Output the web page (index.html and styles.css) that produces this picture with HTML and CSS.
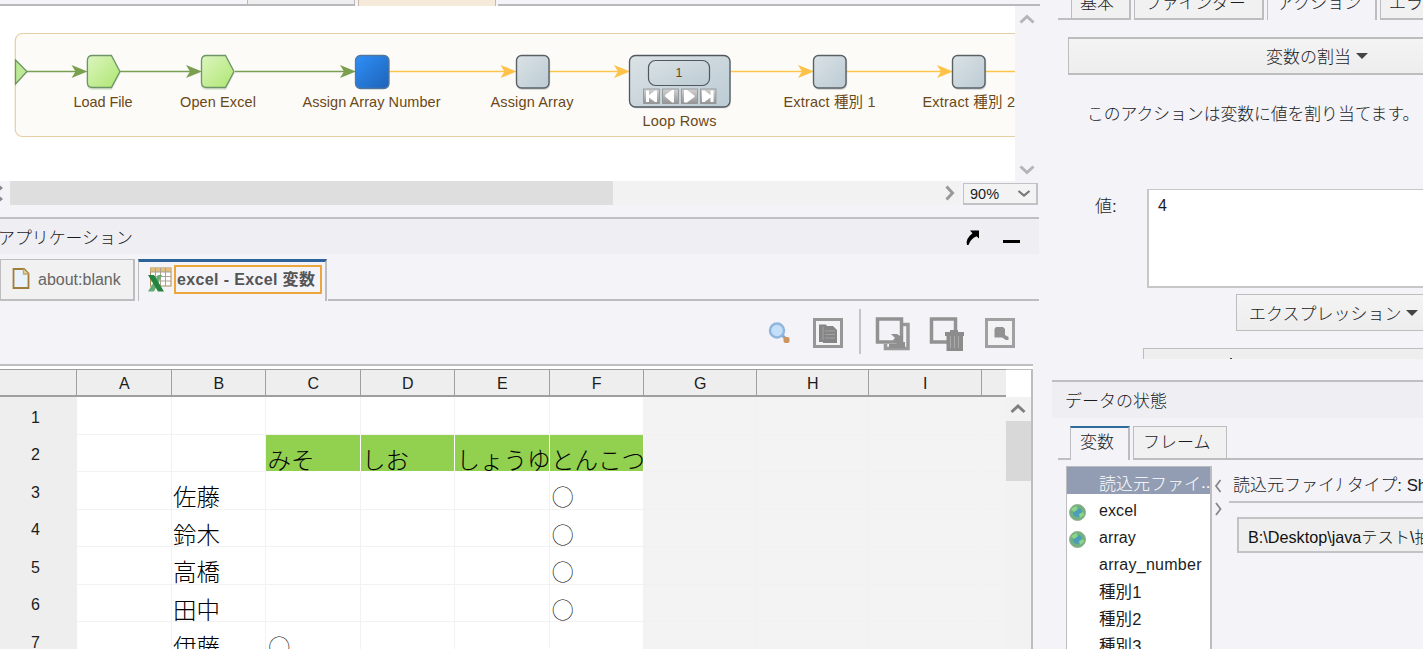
FILE: index.html
```html
<!DOCTYPE html>
<html lang="ja">
<head>
<meta charset="utf-8">
<title>アプリケーション</title>
<link rel="stylesheet" href="styles.css">
</head>
<body>
<div class="app">
  <main class="left">
    <div class="file-tabs"><i class="ft-line a"></i><i class="ft-tab"></i><i class="ft-line c"></i><i class="ft-active"></i><i class="ft-line b"></i></div>
    <div class="canvas-row">
      <svg class="flow" width="1015" height="175" viewBox="0 6 1015 175">
        <defs>
          <linearGradient id="green" x1="0" y1="0" x2="1" y2="1"><stop offset="0" stop-color="#dcf5c0"/><stop offset="1" stop-color="#aee670"/></linearGradient>
          <linearGradient id="gray" x1="0" y1="0" x2="1" y2="1"><stop offset="0" stop-color="#dae2e5"/><stop offset="1" stop-color="#bccbd4"/></linearGradient>
          <linearGradient id="blue" x1="0" y1="0" x2="1" y2="1"><stop offset="0" stop-color="#2e90f8"/><stop offset="1" stop-color="#1e62b8"/></linearGradient>
          <linearGradient id="btn" x1="0" y1="0" x2="0" y2="1"><stop offset="0" stop-color="#d2d2d2"/><stop offset="1" stop-color="#959595"/></linearGradient>
          <path id="head" d="M-16-6.5L0 0L-16 6.5L-12 0Z"/>
          <rect id="step" width="32.500" height="32.500" rx="5" fill="url(#gray)" stroke="#5a6165" stroke-width="1.4"/>
          <path id="pent" d="M5 0H24L32.5 16L24 32H5Q0 32 0 27V5Q0 0 5 0Z" fill="url(#green)" stroke="#6d9568" stroke-width="1.3"/>
        </defs>
        <rect x="15.3" y="33.5" width="1040" height="103" rx="7" fill="#fcfbf8" stroke="#e6cfa4" stroke-width="1.2"/>
        <path d="M15.5 60L27 71.500L15.500 84Z" fill="#bde995" stroke="#6d9568" stroke-width="1.3"/>
        <g stroke="#7a9f52" stroke-width="1.3"><path d="M27 71.500H76M120 71.500H190M235 71.500H345"/></g>
        <g fill="#7a9f4f"><use href="#head" x="87.500" y="71.500"/><use href="#head" x="202" y="71.500"/><use href="#head" x="356" y="71.500"/></g>
        <g stroke="#fdc64b" stroke-width="1.400"><path d="M389 71.500H505M549 71.500H620M730 71.500H802M846 71.500H941M985 71.500H1015"/></g>
        <g fill="#fdc247"><use href="#head" x="516.500" y="71.500"/><use href="#head" x="630" y="71.500"/><use href="#head" x="814" y="71.500"/><use href="#head" x="953" y="71.500"/></g>
        <use href="#pent" x="87.400" y="57" opacity=".25"/><use href="#pent" x="87.400" y="55.500"/>
        <use href="#pent" x="201.500" y="57" opacity=".25"/><use href="#pent" x="201.500" y="55.500"/>
        <rect x="355.500" y="55.500" width="33.500" height="33" rx="5" fill="url(#blue)" stroke="#54789c" stroke-width="1.300"/>
        <use href="#step" x="517" y="56.500" opacity=".3"/><use href="#step" x="516.500" y="55.500"/>
        <use href="#step" x="814" y="56.500" opacity=".3"/><use href="#step" x="813.500" y="55.500"/>
        <use href="#step" x="953" y="56.500" opacity=".3"/><use href="#step" x="952.500" y="55.500"/>
        <rect x="630" y="57" width="101" height="51.500" rx="6" fill="#b9c2c6" opacity=".5"/>
        <rect x="629.500" y="55.500" width="100.500" height="51.500" rx="6" fill="url(#gray)" stroke="#50585e" stroke-width="1.300"/>
        <rect x="648.500" y="60.500" width="61" height="25" rx="7" fill="url(#gray)" stroke="#50585e" stroke-width="1.200"/>
        <g fill="url(#btn)" stroke="#8d9193" stroke-width=".8"><rect x="643.500" y="89" width="16" height="14.500"/><rect x="662.500" y="89" width="16" height="14.500"/><rect x="681.500" y="89" width="16" height="14.500"/><rect x="700.500" y="89" width="15.500" height="14.500"/></g>
        <g fill="#fff"><path d="M646 90.500h3v4.500l6-4.500h2v11.500h-2l-6-4.500v4.500H646zM674 90v12.500h-2L665 96.500V95l7-5zM684 90h3l7.500 5.500v1.500L687 102.500h-3zM702 90.500h2.500l6 4.500v-4.500h3V102h-3v-4.500l-6 4.500H702z"/></g>
        <g class="flow-text">
          <text x="73.500" y="107" textLength="59">Load File</text>
          <text x="180" y="107" textLength="76">Open Excel</text>
          <text x="302.500" y="107" textLength="138">Assign Array Number</text>
          <text x="490.500" y="107" textLength="83">Assign Array</text>
          <text x="642.500" y="126" textLength="74">Loop Rows</text>
          <text x="783.500" y="107" textLength="92">Extract 種別 1</text>
          <text x="922.500" y="107" textLength="92.500">Extract 種別 2</text>
          <text class="count" x="675.500" y="77">1</text>
        </g>
      </svg>
      <div class="vscroll">
        <svg width="16" height="10" viewBox="0 0 16 10"><path d="M1.500 8.500L8 2.500L14.500 8.500" fill="none" stroke="#b5b5b8" stroke-width="3"/></svg>
        <svg width="16" height="10" viewBox="0 0 16 10"><path d="M1.500 1.500L8 7.500L14.500 1.500" fill="none" stroke="#b5b5b8" stroke-width="3"/></svg>
      </div>
    </div>
    <div class="hscroll">
      <svg class="split" width="10" height="24" viewBox="0 0 10 24"><path d="M0 4.500L3 7L0 9.500ZM0 15.500L3 18L0 20.500Z" fill="#888"/></svg>
      <div class="track"><i class="thumb"></i><svg width="10" height="16" viewBox="0 0 10 16"><path d="M1.500 1.500L7.500 8L1.500 14.500" fill="none" stroke="#999" stroke-width="3"/></svg></div>
      <div class="zoom-select"><span>90%</span><svg width="14" height="8" viewBox="0 0 14 8"><path d="M1.500 1L7 5.500L12.500 1" fill="none" stroke="#777" stroke-width="2.200"/></svg></div>
    </div>
    <header class="app-head">
      <span class="jp">アプリケーション</span>
      <div class="head-icons">
        <svg width="15" height="17" viewBox="0 0 15 17"><path d="M5 1.500H14V9.500L11.500 7.200Q5.500 10 3.500 16H2Q0 10 7.500 4.200Z"/></svg>
        <i class="minimize"></i>
      </div>
    </header>
    <div class="doc-tabs">
      <div class="doc-tab"><svg width="18" height="22" viewBox="0 0 18 22"><path d="M1.500 1H12L16.500 5.500V20H1.500Z" fill="#e9f1fb" stroke="#a07e3a" stroke-width="1.800"/><path d="M11.500 1V6H16.500" fill="#e5d4a5" stroke="#c4a562" stroke-width="1.300"/></svg><span>about:blank</span></div>
      <i class="tab-gap"></i>
      <div class="doc-tab active"><svg width="24" height="25" viewBox="0 0 24 25"><rect x="2.500" y="1" width="20.500" height="18" fill="#fff" stroke="#aa8e56"/><path d="M2.500 1H23V5H2.500Z" fill="#e0bd7d"/><path d="M7.500 1V19M12.500 1V19M17.500 1V19M2.500 5H23M2.500 9.500H23M2.500 14H23" stroke="#a9a291"/><path d="M10 8H14L6 24.500H0Z" fill="#67ad73"/><path d="M0 8H6L16 24.500H10Z" fill="#23833f"/></svg><span class="focus">excel - Excel 変数</span></div>
      <i class="tab-fill"></i>
    </div>
    <div class="toolbar">
      <svg class="t1" width="24" height="24" viewBox="0 0 24 24"><path d="M13 13L17 17" stroke="#8fa6c0" stroke-width="3"/><circle cx="9" cy="9.500" r="7" fill="#c4e0f8" stroke="#8fb6de" stroke-width="2.500"/><rect x="15.500" y="16" width="6" height="6" rx="2" fill="#cc955f"/></svg>
      <svg class="t2" width="32" height="32" viewBox="0 0 32 32"><rect x="2.500" y="2.500" width="27" height="27" fill="#f3f3f5" stroke="#979797" stroke-width="3"/><path d="M7 7.500H14L15 9H21L25 13V26H11V25H7Z" fill="#858585"/><path d="M11 10V23M13 14H23M13 17.500H23M13 21H23" stroke="#a2a2a2"/></svg>
      <i class="sep"></i>
      <svg class="t3" width="36" height="36" viewBox="0 0 36 36"><path d="M27 8.500H33V32.500H10.500V28" fill="none" stroke="#999" stroke-width="3.500"/><rect x="2.500" y="3" width="24" height="23" fill="#f3f3f7" stroke="#929292" stroke-width="3.500"/><path d="M16 18H22L25 20H28V26H30V32H14V28H22L18 24L20 22Z" fill="#8f8f8f"/></svg>
      <svg class="t4" width="36" height="36" viewBox="0 0 36 36"><rect x="2.500" y="3" width="24" height="23" fill="#f3f3f7" stroke="#929292" stroke-width="3.500"/><path d="M16 16H21V14H29V16H35V20H34V35H17.500V20H16Z" fill="#8c8c8c"/><path d="M21.500 20V32M25.500 20V32M29.500 20V32" stroke="#aaa"/></svg>
      <svg class="t5" width="32" height="32" viewBox="0 0 32 32"><rect x="2.500" y="2.500" width="27" height="27" fill="#f3f3f5" stroke="#a0a0a0" stroke-width="3"/><path d="M12 10H19L21 12V18L24.500 20V23H22L18 20.500H10.500V12Z" fill="#929292"/></svg>
    </div>
    <section class="sheet">
      <div class="grid" id="grid"></div>
      <div class="sheet-scroll"><i class="corner"></i><div class="up"><svg width="16" height="11" viewBox="0 0 16 11"><path d="M1.500 9L8 3L14.500 9" fill="none" stroke="#808080" stroke-width="3"/></svg></div><i class="sthumb"></i></div>
    </section>
  </main>
  <aside class="right">
    <div class="prop-tabs">
      <i class="lead"></i><span class="pt p1">基本</span><i class="g"></i><span class="pt p2">ファインダー</span><i class="g"></i><span class="pt on">アクション</span><i class="g"></i><span class="pt p4">エラー</span>
    </div>
    <div class="assign"><span>変数の割当</span><i class="caret"></i></div>
    <p class="desc">このアクションは変数に値を割り当てます。</p>
    <div class="value-row"><label>値:</label><div class="value-box">4</div></div>
    <div class="expr-row"><div class="expr"><span>エクスプレッション</span><i class="caret"></i></div></div>
    <div class="cut-row"><i class="cut"><i class="dot"></i></i></div>
    <header class="data-head">データの状態</header>
    <div class="data-tabs"><i class="lead"></i><span class="dt on">変数</span><i class="g"></i><span class="dt">フレーム</span><i class="fill"></i></div>
    <div class="data-body">
      <ul class="vars">
        <li class="sel"><b></b>読込元ファイ<em>...</em></li>
        <li><b><svg width="19" height="19" viewBox="0 0 19 19"><circle cx="9.500" cy="9.500" r="8" fill="#6fb183" stroke="#9cae90"/><circle cx="9.500" cy="9.500" r="4.500" fill="#4c9dba"/><path d="M3 6L8 3L10 6L6 9ZM11 11L15 9L16 12L12 15Z" fill="#8dd683"/></svg></b>excel</li>
        <li><b><svg width="19" height="19" viewBox="0 0 19 19"><circle cx="9.500" cy="9.500" r="8" fill="#6fb183" stroke="#9cae90"/><circle cx="9.500" cy="9.500" r="4.500" fill="#4c9dba"/><path d="M3 6L8 3L10 6L6 9ZM11 11L15 9L16 12L12 15Z" fill="#8dd683"/></svg></b>array</li>
        <li class="wide"><b></b>array_number</li>
        <li class="kanji"><b></b>種別1</li>
        <li class="kanji"><b></b>種別2</li>
        <li class="kanji"><b></b>種別3</li>
      </ul>
      <div class="hsplit"><svg width="9" height="14" viewBox="0 0 9 14"><path d="M6.500 1L2 7L6.500 13" fill="none" stroke="#888" stroke-width="1.800"/></svg><svg width="9" height="14" viewBox="0 0 9 14"><path d="M2 1L6.500 7L2 13" fill="none" stroke="#888" stroke-width="1.800"/></svg></div>
      <div class="detail">
        <div class="detail-head"><span class="name">読込元ファイル</span><span class="type">タイプ: Short Text</span></div>
        <div class="path">B:\Desktop\javaテスト\抽出</div>
      </div>
    </div>
  </aside>
</div>
<script src="sheet.js"></script>
</body>
</html>
```
FILE: sheet.js
```js
const cells = {
  C2: 'みそ', D2: 'しお', E2: 'しょうゆ', F2: 'とんこつ',
  B3: '佐藤', B4: '鈴木', B5: '高橋', B6: '田中', B7: '伊藤',
  F3: '○', F4: '○', F5: '○', F6: '○', C7: '○'
};
const cols = ['A', 'B', 'C', 'D', 'E', 'F', 'G', 'H', 'I', ''];
const grid = document.getElementById('grid');

function add(className, text) {
  const el = document.createElement('div');
  el.className = className;
  const span = document.createElement('span');
  span.textContent = text;
  el.appendChild(span);
  grid.appendChild(el);
}

add('ch', '');
cols.forEach(c => add('ch', c));
for (let r = 1; r <= 7; r++) {
  add('rh', String(r));
  cols.forEach((c, i) => {
    const text = cells[c + r] || '';
    let name = i > 5 ? 'cell out' : 'cell';
    if (r === 2 && i >= 2 && i <= 5) name += ' green';
    if (text === '○') name += ' mark';
    add(name, text === '○' ? '◯' : text);
  });
}
```
FILE: styles.css
```css
* { box-sizing: border-box; }
body { margin: 0; background: #f3f3f8; color: #1c1c1e; font: 16px "Liberation Sans", "Noto Sans CJK JP", sans-serif; overflow: hidden; }
i, em { font-style: normal; display: block; flex: none; }
svg { display: block; flex: none; }
.app { display: grid; grid-template-columns: 1041px 382px; width: 1423px; height: 649px; overflow: hidden; }
.left { display: flex; flex-direction: column; height: 649px; min-width: 0; overflow: hidden; }
.left > *, .right > * { flex: none; }

.file-tabs { display: flex; height: 6px; }
.ft-line { border-bottom: 2px solid #b9b9bd; }
.ft-line.a { width: 247px; }
.ft-line.b { width: 542px; margin-left: 2px; }
.ft-line.c { width: 3px; border: 0; }
.ft-tab { width: 108px; background: #eee; border: solid #b9b9bd; border-width: 0 1px 2px; }
.ft-active { width: 138px; background: #f6eadb; border: solid #c9b8a4; border-width: 0 1px; }
.canvas-row { display: flex; height: 175px; }
.flow { background: #fff; }
.flow-text { font-size: 14.500px; fill: #6b4817; }
.flow-text .count { font-size: 12.500px; }
.vscroll { width: 26px; display: flex; flex-direction: column; justify-content: space-between; align-items: center; padding: 8px 2px 6px 0; }
.hscroll { display: flex; height: 24px; }
.track { width: 949px; background: #f2f2f3; display: flex; justify-content: space-between; align-items: center; padding-right: 4px; }
.thumb { width: 603px; height: 24px; background: #dedede; }
.zoom-select { width: 75px; height: 22px; margin: 2px 0 0 4px; border: solid #c2c2c4; border-width: 1px 2px 2px 1px; background: #f3f3f3; display: flex; align-items: center; justify-content: space-between; padding: 0 5px 0 6px; font-size: 14.500px; }
.app-head { margin-top: 12px; height: 37px; margin-right: 2px; border-top: 2px solid #bfbfc2; background: #efeff3; display: flex; justify-content: space-between; align-items: center; font-weight: 300; }
.jp { font-size: 16.900px; margin-left: -2px; margin-top: -1px; }
.head-icons { display: flex; align-items: center; gap: 23px; padding-right: 19px; padding-top: 2px; }
.minimize { width: 17px; height: 3px; background: #000; margin-top: 7px; }
.doc-tabs { display: flex; margin-top: 5px; height: 42px; width: 1039px; color: #555; }
.doc-tab { display: flex; align-items: center; height: 42px; }
.doc-tab:first-child { width: 135px; background: #f1f1f1; border: solid #bdbdbf; border-width: 1px 2px 2px 1px; padding-left: 11px; gap: 8px; color: #666; }
.doc-tab:first-child svg { margin-top: -1px; }
.tab-gap { width: 3px; }
.doc-tab.active { width: 189px; border: solid #bdbdbf; border-width: 3px 2px 0 1px; border-top-color: #2c6299; padding: 0 3px 3px 9px; gap: 1px; }
.doc-tab.active svg { margin-top: -2px; }
.focus { border: 2px solid #eca63c; height: 29px; width: 149px; padding-left: 1px; font-weight: bold; line-height: 26px; white-space: nowrap; margin: -1px 0 0 1px; letter-spacing: .36px; }
.tab-fill { width: 711px; margin-left: 1px; border-bottom: 2px solid #bdbdbf; }
.toolbar { height: 63px; display: flex; align-items: center; }
.t1 { margin-left: 768px; }
.t2 { margin-left: 20px; }
.sep { width: 2px; height: 45px; background: #c5c5c7; margin: -2px 0 0 15px; }
.t3 { margin: 3px 0 0 14px; }
.t4 { margin: 3px 0 0 18px; }
.t5 { margin-left: 19px; }

.sheet { display: flex; height: 286px; width: 1033px; border-top: 2px solid #bfbfc1; padding-top: 3px; background: #fff; }
.grid { display: grid; width: 1006px; grid-template-columns: 77px 94.500px 94.500px 94.500px 94.500px 94.500px 94.500px 112.500px 112.500px 112.500px 24.500px; grid-template-rows: 28px repeat(7, 37.500px); height: 281px; overflow: hidden; }
.ch { background: #eee; border: solid #9f9f9f; border-width: 1px 1px 2px 0; display: flex; align-items: center; justify-content: center; padding: 3px 0 0 1px; }
.ch:nth-child(11) { border-right: 0; }
.rh { background: #eee; display: flex; align-items: center; justify-content: center; padding: 4px 6px 0 0; }
.cell { background: #fff; border: solid #f2f2f3; border-width: 0 1px 1px 0; overflow: hidden; white-space: nowrap; font-size: 23.500px; font-weight: 300; padding-left: 2px; line-height: 33px; color: #000; }
.cell span { display: block; padding-top: 10px; margin-left: -.500px; }
.cell.mark { font-size: 21.500px; padding-left: 3px; }
.cell.out { background: #f3f3f3; border-color: #f1f1f2; }
.cell.green { background: #92d050; border-color: #fff; }
.sheet-scroll { width: 27px; border: solid #bdbdbf; border-width: 1px 2px 0 0; background: #f2f2f2; }
.corner { height: 27px; background: #fff; }
.up { height: 24px; padding: 6px 0 0 4px; }
.sthumb { height: 60px; background: #d8d8d8; }

.right { display: flex; flex-direction: column; height: 649px; min-width: 0; overflow: hidden; font-size: 17px; font-weight: 300; white-space: nowrap; }
.prop-tabs { display: flex; height: 20px; overflow: hidden; }
.lead { width: 14px; margin-left: 17px; border-bottom: 2px solid #bfbfc1; }
.prop-tabs .lead { width: 13px; }
.g { width: 3px; }
.pt { flex: none; height: 20px; line-height: 8px; border: solid #bdbdbf; border-width: 0 2px 2px 1px; background: #f1f1f2; padding-left: 8px; }
.p1 { width: 60px; }
.p2 { width: 130px; font-size: 16.800px; padding-left: 10px; }
.pt.on { width: 110px; border-bottom: 0; background: none; padding-left: 9px; }
.p4 { width: 70px; }
.assign { margin: 17px 0 0 27px; width: 500px; height: 38px; border: solid #bdbdbf; border-width: 2px 0 2px 1px; background: linear-gradient(#f4f4f4, #ededed); display: flex; align-items: center; padding: 0 0 2px 197px; gap: 5px; }
.caret { border: 6px solid transparent; border-top: 6px solid #444; border-bottom: 0; margin-top: 1px; }
.desc { margin: 27px 0 0 46px; height: 25px; line-height: 26px; font-size: 16.800px; }
.value-row { display: flex; margin: 62px 0 0 54px; height: 99px; }
.value-row label { flex: none; width: 52px; padding-top: 3px; }
.value-box { flex: none; width: 300px; border: solid #c7c7c9; border-width: 1px 0 2px 2px; background: #fff; padding: 7px 9px; font-size: 16px; }
.value-row .value-box { margin-left: 0; }
.value-row label { width: 52px; }
.expr-row { padding-left: 195px; margin-top: 6px; }
.expr { width: 220px; height: 37px; border: 1px solid #bdbdbf; background: linear-gradient(#f4f4f4, #ededed); display: flex; align-items: center; padding-left: 12px; gap: 4px; }
.cut-row { margin: 17px 0 0 102px; }
.cut { width: 290px; height: 11px; background: #eee; border: solid #bdbdbf; border-width: 1px 0 0 1px; padding: 9px 0 0 86px; }
.dot { width: 2px; height: 1px; background: #444; }
.data-head { margin: 21px 0 0 11px; height: 38px; border-top: 2px solid #bfbfc1; background: #efeff3; line-height: 40px; padding-left: 13px; }
.data-tabs { display: flex; height: 34px; margin-top: 8px; }
.data-tabs .lead { width: 12px; }
.dt { flex: none; height: 34px; width: 94px; border: solid #bdbdbf; border-width: 1px 1px 2px; background: #f1f1f2; line-height: 31px; padding-left: 9px; }
.dt.on { width: 60px; border-width: 2px 2px 0 1px; border-top-color: #2c6d9c; background: none; line-height: 30px; }
.fill { flex: 1; border-bottom: 2px solid #bdbdbf; }
.data-body { display: flex; margin: 6px 0 0 25px; }
.vars { margin: 0; padding: 0; list-style: none; flex: none; width: 146px; height: 190px; overflow: hidden; background: #fff; border: solid #bdbdbf; border-width: 1px 2px 0 1px; font-size: 16px; }
.vars li { display: flex; align-items: center; height: 27px; padding-top: 7px; letter-spacing: .1px; }
.vars .wide { letter-spacing: .260px; }
.vars .kanji { padding-top: 4px; font-size: 16.500px; font-weight: 400; }
.vars .sel { height: 27px; color: #fff; background: #929db3; font-size: 17px; padding-top: 4px; letter-spacing: 0; }
.vars b { flex: none; width: 32px; padding: 3px 0 0 1px; }
.hsplit { width: 17px; flex: none; padding: 13px 0 0 2px; display: flex; flex-direction: column; gap: 9px; }
.detail { flex: none; width: 260px; }
.detail-head { display: flex; align-items: center; gap: 5px; height: 37px; border-bottom: 2px solid #c3c3c5; padding-left: 4px; }
.name { width: 109px; overflow: hidden; }
.type { font-size: 16.800px; }
.path { margin: 14px 0 0 8px; width: 260px; height: 36px; border: 2px solid #c3c3c5; background: #efefef; line-height: 36px; padding-left: 9px; font-size: 16.200px; color: #111; }
.value-row label { width: 52px; margin-right: 0; }
.value-row { column-gap: 0; }
.value-row label { min-width: 52px; }
```
